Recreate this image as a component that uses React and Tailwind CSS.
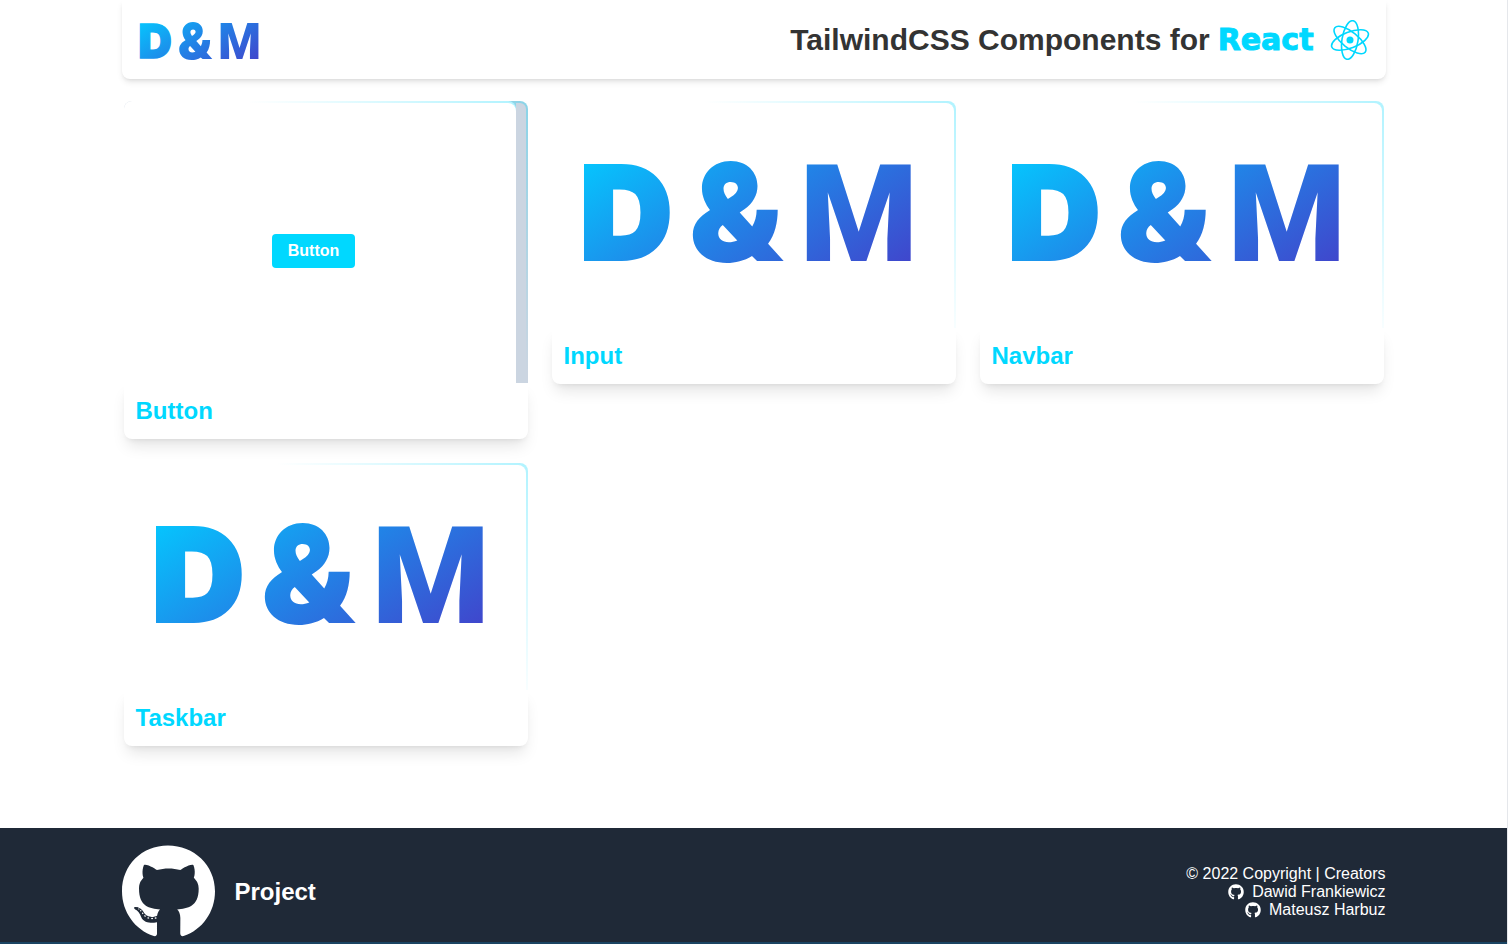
import React, { useId } from "react";
import { FaGithub } from "react-icons/fa";

function Mark({ className }) {
  const id = useId();
  return (
    <svg viewBox="0 0 334 102" className={`block overflow-visible ${className}`} role="img" aria-label="D&M">
      <defs>
        <linearGradient id={id} gradientUnits="userSpaceOnUse" x1="0" y1="0" x2="150" y2="223">
          <stop offset="0" stopColor="#06c4fd" />
          <stop offset="0.48" stopColor="#2184e7" />
          <stop offset="1" stopColor="#4046cc" />
        </linearGradient>
      </defs>
      <g fill={`url(#${id})`} stroke={`url(#${id})`}>
        <text x="-5" y="97" fontFamily="Inter" fontWeight="900" fontSize="129" strokeWidth="4">D</text>
        <text x="105" y="99" fontFamily="Inter" fontWeight="900" fontSize="137" strokeWidth="0">&amp;</text>
        <text x="217" y="99" fontFamily="Roboto" fontWeight="900" fontSize="137" strokeWidth="0">M</text>
      </g>
    </svg>
  );
}

function ReactLogo() {
  return (
    <svg viewBox="0 0 40 40" className="size-10" fill="none" stroke="#00d8ff" strokeWidth="1.6" aria-hidden="true">
      <circle cx="20" cy="20" r="3.5" fill="#00d8ff" stroke="none" />
      <ellipse cx="20" cy="20" rx="19.5" ry="8" transform="rotate(-21 20 20)" />
      <ellipse cx="20" cy="20" rx="19.5" ry="8" transform="rotate(39 20 20)" />
      <ellipse cx="20" cy="20" rx="19.5" ry="8" transform="rotate(99 20 20)" />
    </svg>
  );
}

function Card({ title, children }) {
  return (
    <article>
      {children}
      <h2 className="rounded-b-lg bg-white px-3 py-3 text-2xl leading-8 font-bold text-[#00d8ff] shadow-lg">
        <a href={`#${title.toLowerCase()}`}>{title}</a>
      </h2>
    </article>
  );
}

function LogoPreview() {
  return (
    <div className="aspect-video rounded-t-lg bg-linear-225 from-[#b0f3ff] to-white to-40% pt-0.5 pr-0.5">
      <div className="flex h-full items-center justify-center rounded-t-lg bg-white pr-1.5 pb-1">
        <Mark className="w-5/6" />
      </div>
    </div>
  );
}

function ButtonPreview() {
  return (
    <div className="flex aspect-[404/282] rounded-t-lg bg-linear-225 from-[#8ad4e8] to-[#cbd5e1] to-40%">
      <div className="grow rounded-t-lg bg-linear-225 from-[#b0f3ff] to-white to-40% pt-0.5">
        <div className="flex h-full items-center justify-center rounded-t-lg bg-white pt-4 pr-3">
          <button type="button" className="rounded-sm bg-[#00d8ff] px-4 py-1 leading-[26px] font-bold text-white">
            Button
          </button>
        </div>
      </div>
      <div className="w-3 pt-0.5 pr-0.5">
        <div className="h-full rounded-tr-md bg-[#cbd5e1]" />
      </div>
    </div>
  );
}

export default function App() {
  return (
    <div className="flex min-h-screen flex-col border-r border-gray-200 bg-white font-['Liberation_Sans',Arial,sans-serif]">
      <div className="mx-auto w-full max-w-7xl grow px-2">
        <header className="flex items-center justify-between rounded-b-lg px-4 pt-5 pb-[19px] shadow-md">
          <a href="#home" className="mt-0.5 ml-0.5 block">
            <Mark className="w-[120px]" />
          </a>
          <h1 className="flex items-center text-3xl font-bold text-[#333]">
            TailwindCSS Components for
            <span className="mr-4 ml-2 font-['DejaVu_Sans',sans-serif] text-[#00d8ff] [-webkit-text-stroke:1px_#00d8ff]">
              React
            </span>
            <ReactLogo />
          </h1>
        </header>
        <main className="grid grid-cols-3 items-start gap-6 px-0.5 pt-[22px] pb-20">
          <Card title="Button">
            <ButtonPreview />
          </Card>
          <Card title="Input">
            <LogoPreview />
          </Card>
          <Card title="Navbar">
            <LogoPreview />
          </Card>
          <Card title="Taskbar">
            <LogoPreview />
          </Card>
        </main>
      </div>
      <footer className="border-b-2 border-[#1a4462] bg-[#1f2937] pt-4 pb-0.5 text-white">
        <div className="mx-auto flex max-w-7xl items-center justify-between px-2">
          <a href="#project" className="flex items-center gap-5 text-2xl font-bold">
            <FaGithub className="h-24 w-[93px]" aria-hidden="true" />
            Project
          </a>
          <div className="flex flex-col items-end text-base leading-[18px]">
            <p>© 2022 Copyright | Creators</p>
            <a href="#dawid" className="flex items-center gap-2 leading-[18px]">
              <FaGithub className="size-4" aria-hidden="true" />
              Dawid Frankiewicz
            </a>
            <a href="#mateusz" className="flex items-center gap-2 leading-[18px]">
              <FaGithub className="size-4" aria-hidden="true" />
              Mateusz Harbuz
            </a>
          </div>
        </div>
      </footer>
    </div>
  );
}
